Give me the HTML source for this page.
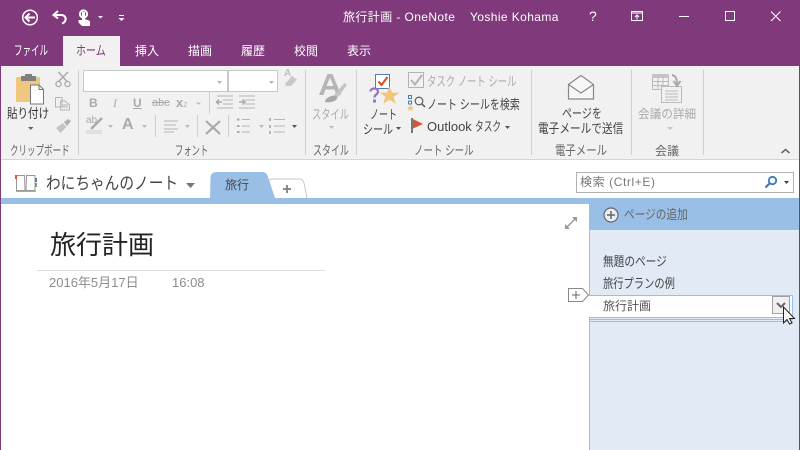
<!DOCTYPE html>
<html lang="ja"><head><meta charset="utf-8"><style>
*{box-sizing:border-box}
html,body{margin:0;padding:0;background:#fff}
#r{position:relative;width:800px;height:450px;overflow:hidden;background:#fff;font-family:"Liberation Sans","Noto Sans CJK JP",sans-serif;font-size:12px;color:#444}
.t{position:absolute;white-space:nowrap;line-height:16px;transform-origin:left center}
.k{font-size:13px}
.b{position:absolute}
.w{color:#fff}
.g{color:#aaa}
.l{color:#666}
.sep{position:absolute;top:70px;width:1px;height:85px;background:#d0d0d0}
.s2{position:absolute;width:1px;background:#cfcfcf}
svg{position:absolute;overflow:visible}
</style></head><body><div id="r">
<div class="b" style="left:0;top:0;width:800px;height:66px;background:#80397b"></div>
<div class="b" style="left:0;top:66px;width:1px;height:384px;background:#80397b"></div>
<div class="b" style="left:799px;top:66px;width:1px;height:384px;background:#80397b"></div>
<div class="b" style="left:1px;top:66px;width:798px;height:93px;background:#f1f1f1"></div>
<div class="b" style="left:1px;top:159px;width:798px;height:1px;background:#d5d5d5"></div>
<div class="b" style="left:63px;top:36px;width:57px;height:30px;background:#f1f1f1"></div>

<!-- QAT -->
<svg style="left:0;top:0" width="140" height="35" fill="none" stroke="#fff">
<circle cx="30" cy="17.500" r="7.300" stroke-width="1.500"/>
<path d="M35 17.500H26M29.500 13.500L25.500 17.500L29.500 21.500" stroke-width="2"/>
<path d="M58 11L53.500 15L58 18.500M54 15H61C65 15 66 18 65.500 20C65 22 63.500 23 62 23.500" stroke-width="2"/>
<circle cx="83.500" cy="14" r="3.600" stroke-width="2"/>
<path d="M82 12H85V19L90 21V26H82L78.500 22.500V20H82Z" fill="#fff" stroke="none"/>
<path d="M98 16H103L100.500 18.500Z" fill="#fff" stroke="none"/>
<path d="M119 15.500H124" stroke-width="1"/>
<path d="M118.500 18H124.500L121.500 21Z" fill="#fff" stroke="none"/>
</svg>

<!-- title -->
<div class="t w" style="left:343px;top:9px;letter-spacing:.4px">旅行計画 - OneNote</div>
<div class="t w" style="left:470px;top:9px;letter-spacing:.4px">Yoshie Kohama</div>
<div class="t w" style="left:589px;top:8px;font-size:14px">?</div>
<svg style="left:630px;top:10px" width="170" height="14" fill="none" stroke="#fff">
<rect x="1.500" y="1.500" width="11" height="9" stroke-width="1"/><path d="M1.500 3H12.500" stroke-width="1"/><path d="M7 9.500V5M5 7L7 5L9 7" stroke-width="1"/>
<path d="M49 6.500H59" stroke-width="1"/>
<rect x="95.500" y="1.500" width="9" height="9" stroke-width="1"/>
<path d="M141 1.500L150.500 11M150.500 1.500L141 11" stroke-width="1"/>
</svg>

<!-- tabs -->
<div class="t w k" style="left:14px;top:43px;transform:scaleX(.655)">ファイル</div>
<div class="t k" style="left:76px;top:43px;color:#80397b;transform:scaleX(.77)">ホーム</div>
<div class="t w" style="left:135px;top:43px">挿入</div>
<div class="t w" style="left:188px;top:43px">描画</div>
<div class="t w" style="left:241px;top:43px">履歴</div>
<div class="t w" style="left:294px;top:43px">校閲</div>
<div class="t w" style="left:347px;top:43px">表示</div>

<!-- separators -->
<div class="sep" style="left:78px"></div>
<div class="sep" style="left:305px"></div>
<div class="sep" style="left:356px"></div>
<div class="sep" style="left:531px"></div>
<div class="sep" style="left:631px"></div>
<div class="sep" style="left:703px"></div>

<!-- clipboard -->
<svg style="left:0;top:66px" width="80" height="70" fill="none">
<rect x="16" y="11" width="24" height="25" rx="1" fill="#efc77f"/>
<path d="M21 15V10H25V8H32V10H36V15Z" fill="#7f7f7f"/>
<path d="M30.500 19H39L43.500 23.500V38H30.500Z" fill="#fff" stroke="#777" stroke-width="1"/>
<path d="M39 19V23.500H43.500" stroke="#777" stroke-width="1"/>
<path d="M28 61H33.500L30.750 64Z" fill="#666"/>
<path d="M58.500 6L67.500 16M68 6L58 16" stroke="#aaa" stroke-width="1.500"/>
<circle cx="58.500" cy="18" r="2.600" stroke="#aaa" stroke-width="1.300"/><circle cx="67.500" cy="18" r="2.600" stroke="#aaa" stroke-width="1.300"/>
<path d="M55.500 31.500H62V41H55.500ZM60.500 35H65L69.500 39V44H60.500Z" fill="#f1f1f1" stroke="#b5b5b5"/>
<path d="M62 39H68M62 41H68" stroke="#b5b5b5"/>
<path d="M56 62L62.500 57L66.500 61L60.500 67Z" fill="#c4c4c4"/><path d="M64 56L68 53L71 55L67 60Z" fill="#b0b0b0"/>
</svg>
<div class="t k" style="left:7px;top:106px;color:#333;transform:scaleX(.81)">貼り付け</div>
<div class="t l k" style="left:10px;top:143px;transform:scaleX(.655)">クリップボード</div>

<!-- font -->
<div class="b" style="left:83px;top:70px;width:145px;height:22px;background:#fff;border:1px solid #c8c8c8"></div>
<div class="b" style="left:228px;top:70px;width:50px;height:22px;background:#fff;border:1px solid #c8c8c8"></div>
<svg style="left:80px;top:65px" width="230" height="30" fill="none">
<path d="M137 16H142L139.500 19ZM189 16H194L191.500 19Z" fill="#b5b5b5"/>
<path d="M205 19L212 11L217 14.500L211 21H206Z" fill="#c8c8c8"/>
</svg>
<div class="t g" style="left:284px;top:66px;font-size:10px;font-weight:bold;color:#c0c0c0">A</div>
<div class="b" style="left:89px;top:95px;font:bold 12px/16px 'Liberation Sans';color:#aaa">B</div>
<div class="b" style="left:113px;top:95px;font:italic 12px/16px 'Liberation Serif';color:#aaa">I</div>
<div class="b" style="left:133px;top:95px;font:bold 12px/16px 'Liberation Sans';color:#aaa;text-decoration:underline">U</div>
<div class="b" style="left:152px;top:95px;font:11px/16px 'Liberation Sans';color:#aaa;text-decoration:line-through">abc</div>
<div class="b" style="left:176px;top:95px;font:bold 13px/16px 'Liberation Sans';color:#aaa">x<span style="font-size:7px;font-weight:normal">2</span></div>
<div class="b" style="left:122px;top:116px;font:bold 16px/18px 'Liberation Sans';color:#aaa">A</div>
<div class="s2" style="left:209px;top:92px;height:22px"></div>
<div class="s2" style="left:155px;top:115px;height:22px"></div>
<div class="s2" style="left:197px;top:115px;height:22px"></div>
<div class="s2" style="left:228px;top:115px;height:22px"></div>
<svg style="left:80px;top:90px" width="230" height="50" fill="none" stroke="#b5b5b5">
<path d="M116 12.500H121L118.500 15Z" fill="#bbb" stroke="none"/>
<path d="M137 6H153M143 10H153M143 14H153M137 18H153"/>
<path d="M142 12H136.500M139 9.500L136.500 12L139 14.500" stroke-width="1.500" stroke="#aaa"/>
<path d="M159 6H175M165 10H175M165 14H175M159 18H175"/>
<path d="M159 12H165M162.500 9.500L165 12L162.500 14.500" stroke-width="1.500" stroke="#aaa"/>
<rect x="6" y="40" width="16" height="4" fill="#e0e0e0" stroke="none"/>
<path d="M11 39L22 28" stroke="#aaa" stroke-width="2.500"/>
<path d="M28 35H33L30.500 38Z" fill="#bbb" stroke="none"/>
<path d="M62 35H67L64.500 38Z" fill="#bbb" stroke="none"/>
<path d="M105 35H110L107.500 38Z" fill="#bbb" stroke="none"/>
<path d="M84 31H98M84 35H96M84 39H98M84 42H94"/>
<path d="M126 31L140 44M140 31L126 44" stroke="#aaa" stroke-width="2.200"/>
<path d="M162 29.500H170M162 36H170M162 42H170"/>
<path d="M157 29.500H159.500M157 36H159.500M157 42H159.500" stroke="#aaa" stroke-width="2"/>
<path d="M179 35H184L181.500 38Z" fill="#bbb" stroke="none"/>
<path d="M194 29.500H205M194 36H205M194 42H205"/>
<path d="M190 28V31M190 35V38M190 41V44" stroke-width="2"/>
<path d="M212 35H217L214.500 38Z" fill="#555" stroke="none"/>
</svg>
<div class="t g" style="left:86px;top:113px;font-size:10px">ab</div>
<div class="t l k" style="left:175px;top:143px;transform:scaleX(.64)">フォント</div>

<!-- style -->
<svg style="left:310px;top:70px" width="46" height="36" fill="none">
<path d="M9 25L17.500 4H22.500L31 25H26.500L24.500 19.500H15.500L13.500 25ZM16.500 16H23.500L20 7.500Z" fill="#b5b5b5"/>
<path d="M24 25L34.500 13L37 15L28 27Z" fill="#c4c4c4"/>
<path d="M15 32C15 28 20 26 24 25.500C28 26 28 28 26 30C23 32 19 33 15 32Z" fill="#a8a8a8"/>
</svg>
<div class="t g k" style="left:312px;top:107px;transform:scaleX(.71)">スタイル</div>
<svg style="left:328px;top:125px" width="10" height="6"><path d="M1 1H6L3.500 4Z" fill="#bbb"/></svg>
<div class="t l k" style="left:313px;top:143px;transform:scaleX(.69)">スタイル</div>

<!-- note tags -->
<svg style="left:360px;top:70px" width="170" height="66" fill="none">
<rect x="15.500" y="4.500" width="14" height="14" fill="#fff" stroke="#4e7fb0"/>
<path d="M18.500 11.500L21.500 15L27.500 7" stroke="#d4553a" stroke-width="2.200"/>
<path d="M29.500 17.500L32 23H38L33.300 26.700L35 32.800L29.500 29.300L24 32.800L25.700 26.700L21 23H27Z" fill="#f0c67c" stroke="#f0c67c" stroke-width=".8"/>
<path d="M10.500 21.500C10.500 17.500 18 17.500 18 21.500C18 24.500 14.500 24.500 14.500 27.500" stroke="#9b6fc4" stroke-width="2.200"/>
<rect x="13" y="29.500" width="3" height="3" fill="#9b6fc4"/>
<rect x="48.500" y="2.500" width="15" height="15" fill="#f1f1f1" stroke="#b3b3b3"/>
<path d="M51 10L55 14.500L62 5" stroke="#b3b3b3" stroke-width="2"/>
<rect x="48.500" y="25.500" width="3" height="3" fill="none" stroke="#4e7fb0"/>
<rect x="48.500" y="31" width="3" height="3" fill="none" stroke="#4e7fb0"/>
<circle cx="59" cy="31" r="3.800" stroke="#666" stroke-width="1.300"/>
<path d="M62 34L65 37" stroke="#555" stroke-width="1.500"/>
<path d="M50.500 34.500L51.500 37H54L52.200 38.700L52.900 41L50.500 39.600L48.100 41L48.800 38.700L47 37H49.500Z" fill="#f0c67c"/>
<rect x="51" y="48" width="2" height="15" fill="#777"/>
<path d="M53 49L63 54L53 58.500Z" fill="#d4553a"/>
</svg>
<div class="t k" style="left:370px;top:107px;transform:scaleX(.69)">ノート</div>
<div class="t k" style="left:363px;top:122px;transform:scaleX(.77)">シール</div>
<svg style="left:396px;top:127px" width="8" height="5"><path d="M0 0H5L2.500 3Z" fill="#555"/></svg>
<div class="t g k" style="left:427px;top:74px;transform:scaleX(.72)">タスク ノート シール</div>
<div class="t k" style="left:427px;top:97px;transform:scaleX(.77)">ノート シールを検索</div>
<div class="t" style="left:427px;top:119px;font-size:13px">Outlook</div>
<div class="t k" style="left:475px;top:119px;transform:scaleX(.67)">タスク</div>
<svg style="left:505px;top:126px" width="8" height="5"><path d="M0 0H5L2.500 3Z" fill="#555"/></svg>
<div class="t l k" style="left:414px;top:143px;transform:scaleX(.73)">ノート シール</div>

<!-- email -->
<svg style="left:565px;top:74px" width="34" height="28" fill="none" stroke="#888">
<path d="M3.500 10.500L16 1.500L28.500 10.500V25H3.500Z" stroke-width="1.200" fill="#f7f7f7"/>
<path d="M3.500 10.500L16 19L28.500 10.500" stroke-width="1.200"/>
</svg>
<div class="t k" style="left:562px;top:106px;transform:scaleX(.77)">ページを</div>
<div class="t k" style="left:538px;top:121px;transform:scaleX(.82)">電子メールで送信</div>
<div class="t l k" style="left:555px;top:143px;transform:scaleX(.8)">電子メール</div>

<!-- meeting -->
<svg style="left:650px;top:72px" width="40" height="32" fill="none" stroke="#bbb">
<rect x="2.500" y="2.500" width="16" height="15" fill="#f1f1f1"/>
<rect x="2" y="2" width="17" height="4" fill="#c4c4c4" stroke="none"/>
<path d="M2.500 9.500H18.500M2.500 13.500H18.500M8 6V17M13 6V17"/>
<rect x="11.500" y="14.500" width="20" height="16" fill="#f1f1f1"/>
<path d="M15 19H28M15 22H28M15 25H28M15 28H28"/>
<path d="M22 3C26 4 27 7 27 12M23.500 9L27 14L30.500 9" stroke="#aaa" stroke-width="2"/>
</svg>
<div class="t g" style="left:638px;top:106px;transform:scaleX(.97)">会議の詳細</div>
<svg style="left:667px;top:127px" width="8" height="5"><path d="M0 0H6L3 3Z" fill="#c4c4c4"/></svg>
<div class="t l" style="left:655px;top:143px">会議</div>
<svg style="left:780px;top:147px" width="12" height="8" fill="none"><path d="M1.500 6L5.500 2.500L9.500 6" stroke="#666" stroke-width="1.500"/></svg>

<!-- notebook bar -->
<svg style="left:14px;top:173px" width="24" height="20" fill="none">
<path d="M2.500 2.500H10.500L11 17.500H2.500ZM12.500 2.500H21V17.500H12V17Z" stroke="#999"/>
<path d="M2 18.500H22" stroke="#aaa"/>
<rect x="1" y="2" width="2" height="4" fill="#d4553a"/>
<rect x="21" y="5" width="2" height="4" fill="#4e7fb0"/>
<rect x="21" y="10" width="2" height="4" fill="#7fa05a"/>
</svg>
<div class="t" style="left:46px;top:174px;font-size:17px;line-height:20px;transform:scaleX(.863)">わにちゃんのノート</div>
<svg style="left:185px;top:182px" width="11" height="7"><path d="M1 1H10L5.500 6Z" fill="#777"/></svg>
<svg style="left:205px;top:168px" width="110" height="36">
<path d="M65 30L63.500 15C63.500 12 65 11 68 11H94C97 11 98 12 99 15L102 30" fill="#fff" stroke="#c8c8c8"/>
<path d="M5 30L5.500 9C5.800 6 8 4 12 4H57C61 4 62 6 63 9L70 30Z" fill="#9abfe6"/>
<path d="M78 21H86M82 17V25" stroke="#8a8a8a" stroke-width="2"/>
</svg>
<div class="b" style="left:1px;top:198px;width:798px;height:6px;background:#9abfe6"></div>
<div class="t" style="left:225px;top:177px">旅行</div>

<!-- search -->
<div class="b" style="left:576px;top:172px;width:218px;height:21px;background:#fff;border:1px solid #b0b0b0"></div>
<div class="t" style="left:580px;top:174px;color:#777;letter-spacing:.6px">検索 (Ctrl+E)</div>
<svg style="left:764px;top:175px" width="30" height="15" fill="none">
<circle cx="8.500" cy="5.500" r="3.700" stroke="#3f79b5" stroke-width="1.800"/>
<path d="M5.500 8.500L1.500 12.500" stroke="#3f79b5" stroke-width="2.200"/>
<path d="M20 6H25L22.500 9Z" fill="#444"/>
</svg>

<!-- page -->
<div class="t" style="left:50px;top:228px;font-size:26px;line-height:34px;color:#222">旅行計画</div>
<div class="b" style="left:37px;top:270px;width:288px;height:1px;background:#dcdcdc"></div>
<div class="t" style="left:49px;top:275px;color:#8c8c8c;font-size:13px">2016年5月17日</div>
<div class="t" style="left:172px;top:275px;color:#8c8c8c;font-size:13px">16:08</div>
<svg style="left:564px;top:216px" width="14" height="14" fill="none" stroke="#999">
<path d="M2 12L12 2" stroke-width="1.500"/><path d="M1 8V13H6ZM8 1H13V6Z" fill="#999" stroke="none"/>
</svg>

<!-- page list -->
<div class="b" style="left:589px;top:204px;width:210px;height:246px;background:#e1eaf5;border-left:1px solid #9abfe6"></div>
<div class="b" style="left:590px;top:204px;width:209px;height:26px;background:#9abfe6"></div>
<svg style="left:603px;top:207px" width="16" height="16" fill="none" stroke="#666">
<circle cx="8" cy="8" r="7" fill="#e8eef5" stroke-width="1.200"/><path d="M8 4V12M4 8H12" stroke-width="1.500"/>
</svg>
<div class="t k" style="left:624px;top:207px;color:#666;transform:scaleX(.82)">ページの追加</div>
<div class="t k" style="left:603px;top:254px;transform:scaleX(.82)">無題のページ</div>
<div class="t k" style="left:603px;top:276px;transform:scaleX(.79)">旅行プランの例</div>
<div class="b" style="left:589px;top:295px;width:204px;height:23px;background:#fff;border:1px solid #9abfe6;border-left:0"></div>
<div class="b" style="left:590px;top:319px;width:203px;height:1px;background:#9abfe6"></div>
<div class="b" style="left:590px;top:321px;width:203px;height:1px;background:#9abfe6"></div>
<div class="t" style="left:603px;top:298px;color:#555">旅行計画</div>
<svg style="left:567px;top:287px" width="24" height="16" fill="none">
<path d="M1.500 1.500H15.500L21.500 8L15.500 14.500H1.500Z" fill="#fff" stroke="#888"/>
<path d="M5 8H13M9 4V12" stroke="#666"/>
</svg>
<svg style="left:772px;top:296px" width="28" height="32" fill="none">
<rect x="0.500" y="0.500" width="17" height="17" fill="#f0f0f0" stroke="#a0a0a0"/>
<path d="M5 7L9 11L13 7" stroke="#666" stroke-width="2"/>
<path d="M11.500 11V27L15 23.500L17.500 28L20 27L17.500 22.500H22.500Z" fill="#fff" stroke="#222"/>
</svg>
</div></body></html>
